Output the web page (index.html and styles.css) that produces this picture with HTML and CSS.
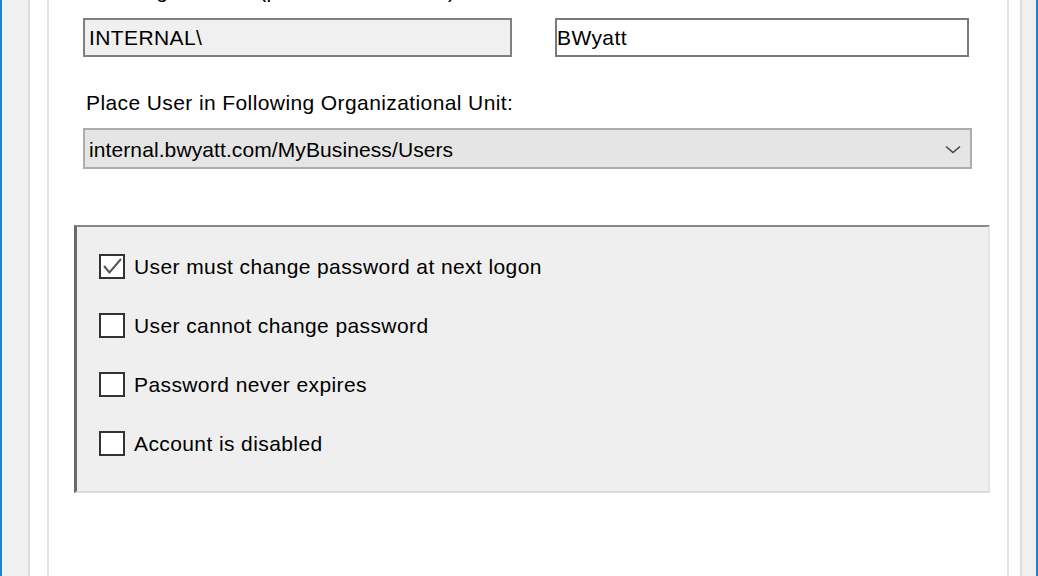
FILE: index.html
```html
<!DOCTYPE html>
<html>
<head>
<meta charset="utf-8">
<link rel="stylesheet" href="styles.css">
</head>
<body>
<div class="window">
  <div class="frame-outer frame-left"></div>
  <div class="frame-inner frame-inner-left"></div>
  <main class="content">
    <div class="top-label">User logon name (pre-Windows 2000):</div>
    <div class="field-row">
      <div class="field field-disabled field-domain">INTERNAL\</div>
      <div class="field field-user">BWyatt</div>
    </div>
    <div class="label">Place User in Following Organizational Unit:</div>
    <div class="combo">
      <span class="combo-text">internal.bwyatt.com/MyBusiness/Users</span>
      <svg class="chevron" width="16" height="9" viewBox="0 0 16 9"><path d="M1 1.5 L8 7.5 L15 1.5" fill="none" stroke="#444" stroke-width="1.6"/></svg>
    </div>
    <section class="group">
      <div class="check-row">
        <span class="box"><svg width="22" height="21" viewBox="0 0 22 21"><path d="M3 10 L8.5 16.5 L20 3" fill="none" stroke="#555" stroke-width="2"/></svg></span>
        <span class="check-label">User must change password at next logon</span>
      </div>
      <div class="check-row">
        <span class="box"></span>
        <span class="check-label">User cannot change password</span>
      </div>
      <div class="check-row">
        <span class="box"></span>
        <span class="check-label">Password never expires</span>
      </div>
      <div class="check-row">
        <span class="box"></span>
        <span class="check-label">Account is disabled</span>
      </div>
    </section>
  </main>
  <div class="frame-inner frame-inner-right"></div>
  <div class="frame-outer frame-right"></div>
</div>
</body>
</html>
```
FILE: styles.css
```css
* { box-sizing: border-box; }
html, body { margin: 0; padding: 0; }
body {
  width: 1038px;
  height: 576px;
  overflow: hidden;
  background: #ffffff;
  font-family: "Liberation Sans", Arial, sans-serif;
  font-size: 21px;
  letter-spacing: 0.4px;
  color: #000;
}
.window {
  display: flex;
  height: 576px;
}
.frame-outer {
  background: #f0f0f0;
  flex: none;
}
.frame-left {
  width: 30px;
  border-left: 2px solid #1883d7;
  border-right: 2px solid #dcdcdc;
}
.frame-right {
  width: 18px;
  border-left: 2px solid #dcdcdc;
  border-right: 2px solid #1883d7;
}
.frame-inner {
  background: #fff;
  flex: none;
}
.frame-inner-left {
  width: 19px;
  border-right: 2px solid #e3e3e3;
}
.frame-inner-right {
  width: 13px;
  border-left: 2px solid #e3e3e3;
}
.content {
  flex: none;
  width: 958px;
  padding-left: 25px;
  display: flex;
  flex-direction: column;
  align-items: flex-start;
}
.top-label {
  margin-top: -18px;
  height: 18px;
  line-height: 18px;
  margin-left: 13px;
  white-space: nowrap;
}
.field-row {
  display: flex;
  margin-top: 18px;
  margin-left: 9px;
  gap: 43px;
}
.field {
  height: 39px;
  border: 2px solid #7a7a7a;
  padding-left: 4px;
  display: flex;
  align-items: center;
  line-height: 24px;
  padding-top: 1px;
}
.field-disabled { background: #f0f0f0; border-color: #808080; }
.field-domain { width: 429px; }
.field-user { width: 414px; background: #fff; padding-left: 0; }
.label {
  margin-top: 34px;
  margin-left: 12px;
  line-height: 24px;
  height: 24px;
}
.combo {
  margin-top: 13px;
  margin-left: 9px;
  width: 889px;
  height: 41px;
  background: #e5e5e5;
  border: 2px solid #adadad;
  display: flex;
  align-items: center;
  justify-content: space-between;
  padding: 2px 9px 0 4px;
}
.combo-text { letter-spacing: 0.1px; }
.chevron { display: block; }
.group {
  margin-top: 56px;
  width: 916px;
  height: 268px;
  background: #efefef;
  border-top: 2px solid #8a8a8a;
  border-left: 3px solid #6a6a6a;
  border-right: 2px solid #e3e3e3;
  border-bottom: 2px solid #dcdcdc;
  padding: 27px 0 0 22px;
  display: flex;
  flex-direction: column;
  gap: 34px;
}
.check-row {
  display: flex;
  align-items: center;
  height: 25px;
}
.box {
  width: 26px;
  height: 25px;
  border: 2px solid #333;
  background: #fff;
  flex: none;
  display: flex;
  align-items: center;
  justify-content: center;
}
.box svg { display: block; }
.check-label {
  margin-left: 9px;
  line-height: 24px;
  white-space: nowrap;
}
```
